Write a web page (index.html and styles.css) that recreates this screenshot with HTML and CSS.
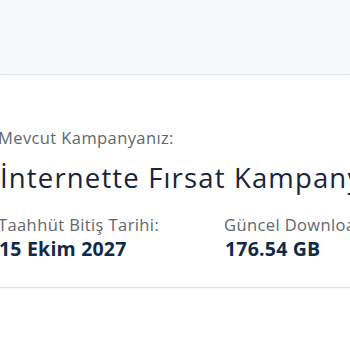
FILE: index.html
```html
<!DOCTYPE html>
<html lang="tr">
<head>
<meta charset="utf-8">
<link rel="stylesheet" href="styles.css">
</head>
<body>
<header class="topbar"></header>
<main class="card">
  <div class="content">
    <p class="label">Mevcut Kampanyanız:</p>
    <h1 class="title">İnternette Fırsat Kampanyası</h1>
    <div class="stats">
      <div class="stat">
        <p class="label">Taahhüt Bitiş Tarihi:</p>
        <p class="value">15 Ekim 2027</p>
      </div>
      <div class="stat">
        <p class="label">Güncel Download Kullanımı:</p>
        <p class="value">176.54 GB</p>
      </div>
    </div>
  </div>
</main>
</body>
</html>
```

FILE: styles.css
```css
html, body {
  margin: 0;
  padding: 0;
  background: #ffffff;
  overflow: hidden;
  width: 350px;
  height: 350px;
}
body {
  font-family: "Open Sans", "Noto Sans", sans-serif;
}
.topbar {
  height: 74px;
  background: #f7f8fa;
  border-bottom: 1px solid #e3e6ea;
  box-shadow: 0 2px 3px rgba(0, 0, 0, 0.02);
}
.card {
  border-bottom: 1px solid #e2e2e2;
  box-shadow: 0 1px 2px rgba(0, 0, 0, 0.04);
  padding-bottom: 25px;
}
.content {
  margin-left: -2px;
  padding-top: 52px;
  white-space: nowrap;
}
.label {
  margin: 0;
  font-size: 16.5px;
  line-height: 22px;
  color: #62676f;
  letter-spacing: 0.4px;
}
.title {
  margin: 12px 0 0 2px;
  font-size: 27.5px;
  line-height: 34px;
  font-weight: 400;
  color: #19253a;
  letter-spacing: 1.15px;
}
.stats {
  display: flex;
  margin-top: 19px;
}
.stat {
  flex: 0 0 226px;
}
.value {
  margin: 0 0 0 1px;
  font-size: 19.5px;
  line-height: 26px;
  font-weight: 700;
  color: #0f2a4a;
  letter-spacing: 0.2px;
}
```
